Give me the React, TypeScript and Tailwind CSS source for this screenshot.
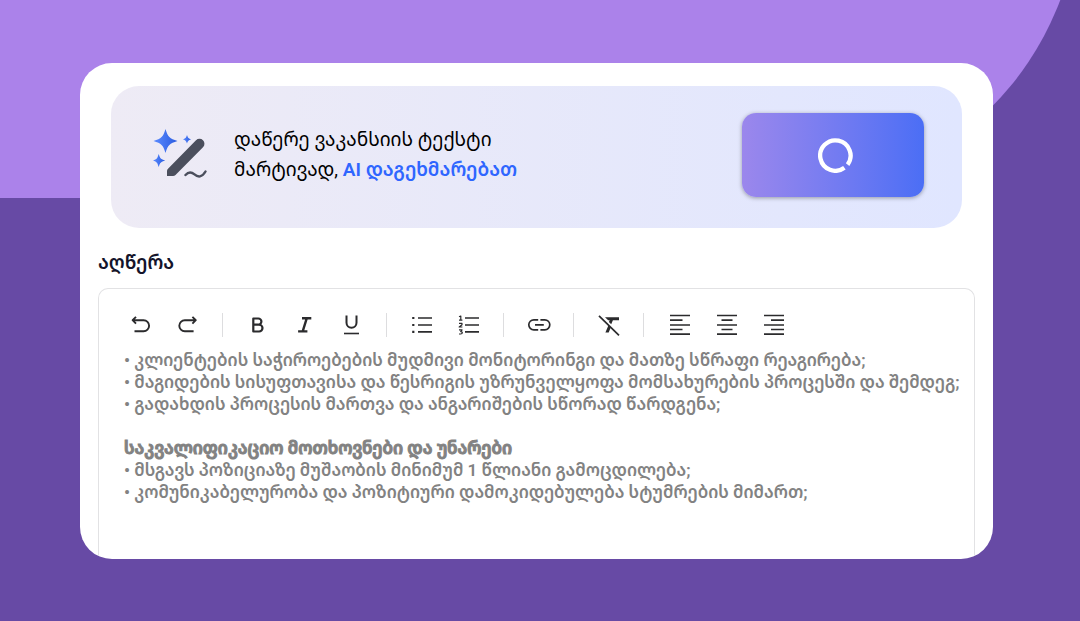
import type { ReactNode } from "react";

interface Tool {
  label: string;
  icon: ReactNode;
}

function Icon({ children }: { children: ReactNode }) {
  return (
    <svg
      viewBox="0 0 24 24"
      className="size-6"
      fill="none"
      stroke="currentColor"
      strokeWidth={1.7}
      strokeLinejoin="round"
      aria-hidden
    >
      {children}
    </svg>
  );
}

const TOOL_GROUPS: Tool[][] = [
  [
    {
      label: "Undo",
      icon: (
        <Icon>
          <path d="M7 3.8 3.6 7.2 7 10.6M3.8 7.2h10.8a5.5 5.5 0 0 1 0 11H5.5" strokeWidth={1.9} />
        </Icon>
      ),
    },
    {
      label: "Redo",
      icon: (
        <Icon>
          <path d="M16.4 3.8 19.8 7.2l-3.4 3.4M19.6 7.2H8.8a5.5 5.5 0 0 0 0 11h8.8" strokeWidth={1.9} />
        </Icon>
      ),
    },
  ],
  [
    {
      label: "Bold",
      icon: (
        <Icon>
          <path
            d="M7.3 5.5h5a3.1 3.1 0 0 1 0 6.2h-5zM7.3 11.7h5.8a3.3 3.3 0 0 1 0 6.8H7.3z"
            strokeWidth={2.2}
          />
        </Icon>
      ),
    },
    {
      label: "Italic",
      icon: (
        <Icon>
          <path d="M9 5.2h9.3M5.1 18.4h9.3M13.8 5.2 9.7 18.4" strokeWidth={2.4} />
        </Icon>
      ),
    },
    {
      label: "Underline",
      icon: (
        <Icon>
          <path d="M6.5 2.6v7.2a5 5 0 0 0 10 0V2.6" strokeWidth={2} />
          <path d="M4 20.5h15" strokeWidth={1.6} />
        </Icon>
      ),
    },
  ],
  [
    {
      label: "Bulleted list",
      icon: (
        <Icon>
          <path d="M8 5h14M8 12h14M8 18.8h14" />
          <path d="M2.2 5h2.2M2.2 12h2.2M2.2 18.8h2.2" strokeWidth={2.2} />
        </Icon>
      ),
    },
    {
      label: "Numbered list",
      icon: (
        <Icon>
          <path d="M8 5h14M8 12h14M8 18.8h14" />
          <path
            d="M2 3.8 3.8 3v4.2M2 7.2h3.4M2 10.4h3v1.3L2.2 14h3.2M2 16.9h3.1L3.7 18.6c2.2 0 2.1 2.4 0 2.4H2"
            strokeWidth={1.2}
          />
        </Icon>
      ),
    },
  ],
  [
    {
      label: "Link",
      icon: (
        <Icon>
          <path d="M11.2 6.8H6.8a5 5 0 0 0 0 10h4.4M13.4 6.8h4.4a5 5 0 0 1 0 10h-4.4M8 11.8h8.8" />
        </Icon>
      ),
    },
  ],
  [
    {
      label: "Clear formatting",
      icon: (
        <Icon>
          <path d="M2 2.8 22 22.4" />
          <path
            d="M8 4.2h14v3H15.9l-1.7 4-2.3-2.2.8-1.8h-1.5zM11.5 12.2l2.2 2.2-2 5H8.4z"
            fill="currentColor"
            stroke="none"
          />
        </Icon>
      ),
    },
  ],
  [
    {
      label: "Align left",
      icon: (
        <Icon>
          <path d="M3 2.5h20M3 7.2h12.5M3 12h20M3 16.5h12.5M3 21.2h20" />
        </Icon>
      ),
    },
    {
      label: "Align center",
      icon: (
        <Icon>
          <path d="M3 2.5h20M7.5 7.2h11M3 12h20M7.5 16.5h11M3 21.2h20" />
        </Icon>
      ),
    },
    {
      label: "Align right",
      icon: (
        <Icon>
          <path d="M3 2.5h20M10 7.2h13M3 12h20M10 16.5h13M3 21.2h20" />
        </Icon>
      ),
    },
  ],
];

const DUTIES = [
  "კლიენტების საჭიროებების მუდმივი მონიტორინგი და მათზე სწრაფი რეაგირება;",
  "მაგიდების სისუფთავისა და წესრიგის უზრუნველყოფა მომსახურების პროცესში და შემდეგ;",
  "გადახდის პროცესის მართვა და ანგარიშების სწორად წარდგენა;",
];

const REQUIREMENTS = [
  "მსგავს პოზიციაზე მუშაობის მინიმუმ 1 წლიანი გამოცდილება;",
  "კომუნიკაბელურობა და პოზიტიური დამოკიდებულება სტუმრების მიმართ;",
];

function MagicPen() {
  return (
    <svg viewBox="0 0 54 52" className="h-[52px] w-[54px] shrink-0" aria-hidden>
      <defs>
        <linearGradient id="spark" x1="0" y1="0" x2="1" y2="0">
          <stop offset="0" stopColor="#5b8bff" />
          <stop offset="1" stopColor="#2a5be0" />
        </linearGradient>
      </defs>
      <g fill="url(#spark)">
        <path d="M12.5 0C15 8 16.5 9.5 24.5 12C16.5 14.5 15 16 12.5 24C10 16 8.5 14.5 0.5 12C8.5 9.5 10 8 12.5 0Z" />
        <path d="M5.7 25C7.2 29.5 7.7 30 12.2 31.5C7.7 33 7.2 33.5 5.7 38C4.2 33.5 4 33 0 31.5C4 30 4.2 29.5 5.7 25Z" />
        <path d="M34 6C35 9 35.5 9.4 38.3 10.3C35.5 11.2 35 11.7 34 14.6C33 11.7 32.5 11.2 29.7 10.3C32.5 9.4 33 9 34 6Z" />
      </g>
      <path
        d="M14 47V42Q14 40.7 15 39.7L43 11.2A4.9 4.9 0 0 1 50 18.2L22.5 46Q21.5 47 20 47Z"
        fill="#4b4f5d"
      />
      <path
        d="M32.5 46C35.5 42.5 38.5 42.8 41.500 45.3C45 48.5 49 48.500 52.5 42.500"
        fill="none"
        stroke="#4b4f5d"
        strokeWidth="2.4"
        strokeLinecap="round"
      />
    </svg>
  );
}

function AssistantBanner() {
  return (
    <section className="mx-[31px] flex h-[142px] items-center rounded-[28px] bg-linear-to-r from-[#eeebf5] to-[#e0e6ff] pr-[38px] pb-1 pl-[42px]">
      <MagicPen />
      <p className="ml-[27px] flex-1 text-[19px] leading-[30px] text-black">
        დაწერე ვაკანსიის ტექსტი
        <br />
        მარტივად,{" "}
        <span className="font-semibold text-[#2f66ff]">AI დაგეხმარებათ</span>
      </p>
      <button
        type="button"
        aria-label="იტვირთება"
        className="flex h-[84px] w-[182px] items-center justify-center rounded-[14px] bg-linear-to-r from-[#9b87ec] to-[#4b6ef5] shadow-[0_1px_4px_rgba(0,0,0,0.35)]"
      >
        <svg viewBox="0 0 36 36" className="ml-1.5 size-9" aria-hidden>
          <path
            d="M29.6 27.6A15.2 15.2 0 1 0 26.4 30.8"
            fill="none"
            stroke="#fff"
            strokeWidth="4.3"
            strokeLinecap="butt"
          />
        </svg>
      </button>
    </section>
  );
}

function Toolbar() {
  return (
    <div role="toolbar" className="flex h-9 pl-[18px] text-[#2b2b2d]">
      {TOOL_GROUPS.map((group, index) => (
        <div key={group[0].label} className="flex items-center">
          {index > 0 && (
            <div className="flex w-[23px] justify-center">
              <span className="h-6 w-px bg-[#dddddf]" />
            </div>
          )}
          {group.map((tool) => (
            <button
              key={tool.label}
              type="button"
              aria-label={tool.label}
              className="flex h-9 w-[47px] items-center justify-center"
            >
              {tool.icon}
            </button>
          ))}
        </div>
      ))}
    </div>
  );
}

function Editor() {
  return (
    <div className="mx-[18px] mt-2.5 flex-1 rounded-t-[10px] border border-b-0 border-[#e2e2e4] pt-[18px]">
      <Toolbar />
      <div
        role="textbox"
        aria-multiline="true"
        aria-labelledby="description-label"
        contentEditable
        suppressContentEditableWarning
        className="mt-[6px] pl-[25px] text-[17px] leading-[22px] font-semibold text-[#828282] outline-none"
      >
        {DUTIES.map((line) => (
          <p key={line}>• {line}</p>
        ))}
        <p className="mt-[22px] [-webkit-text-stroke:1px_#828282]">
          საკვალიფიკაციო მოთხოვნები და უნარები
        </p>
        {REQUIREMENTS.map((line) => (
          <p key={line}>• {line}</p>
        ))}
      </div>
    </div>
  );
}

export default function App() {
  return (
    <main className="relative flex min-h-screen overflow-hidden bg-[#674aa5] pt-[63px] pr-[87px] pb-[62px] pl-20 font-[Roboto,'Noto_Sans','Noto_Sans_Georgian','DejaVu_Sans',sans-serif]">
      <div
        className="absolute inset-x-0 -top-[202px] h-[400px] rounded-br-[306px] bg-[#ab82ea]"
        aria-hidden
      />
      <div className="relative flex min-w-0 flex-1 flex-col overflow-hidden rounded-[32px] bg-white pt-[23px]">
        <AssistantBanner />
        <h2
          id="description-label"
          className="mt-5 px-[18px] text-[19px] leading-[30px] font-semibold text-[#14142b]"
        >
          აღწერა
        </h2>
        <Editor />
      </div>
    </main>
  );
}
